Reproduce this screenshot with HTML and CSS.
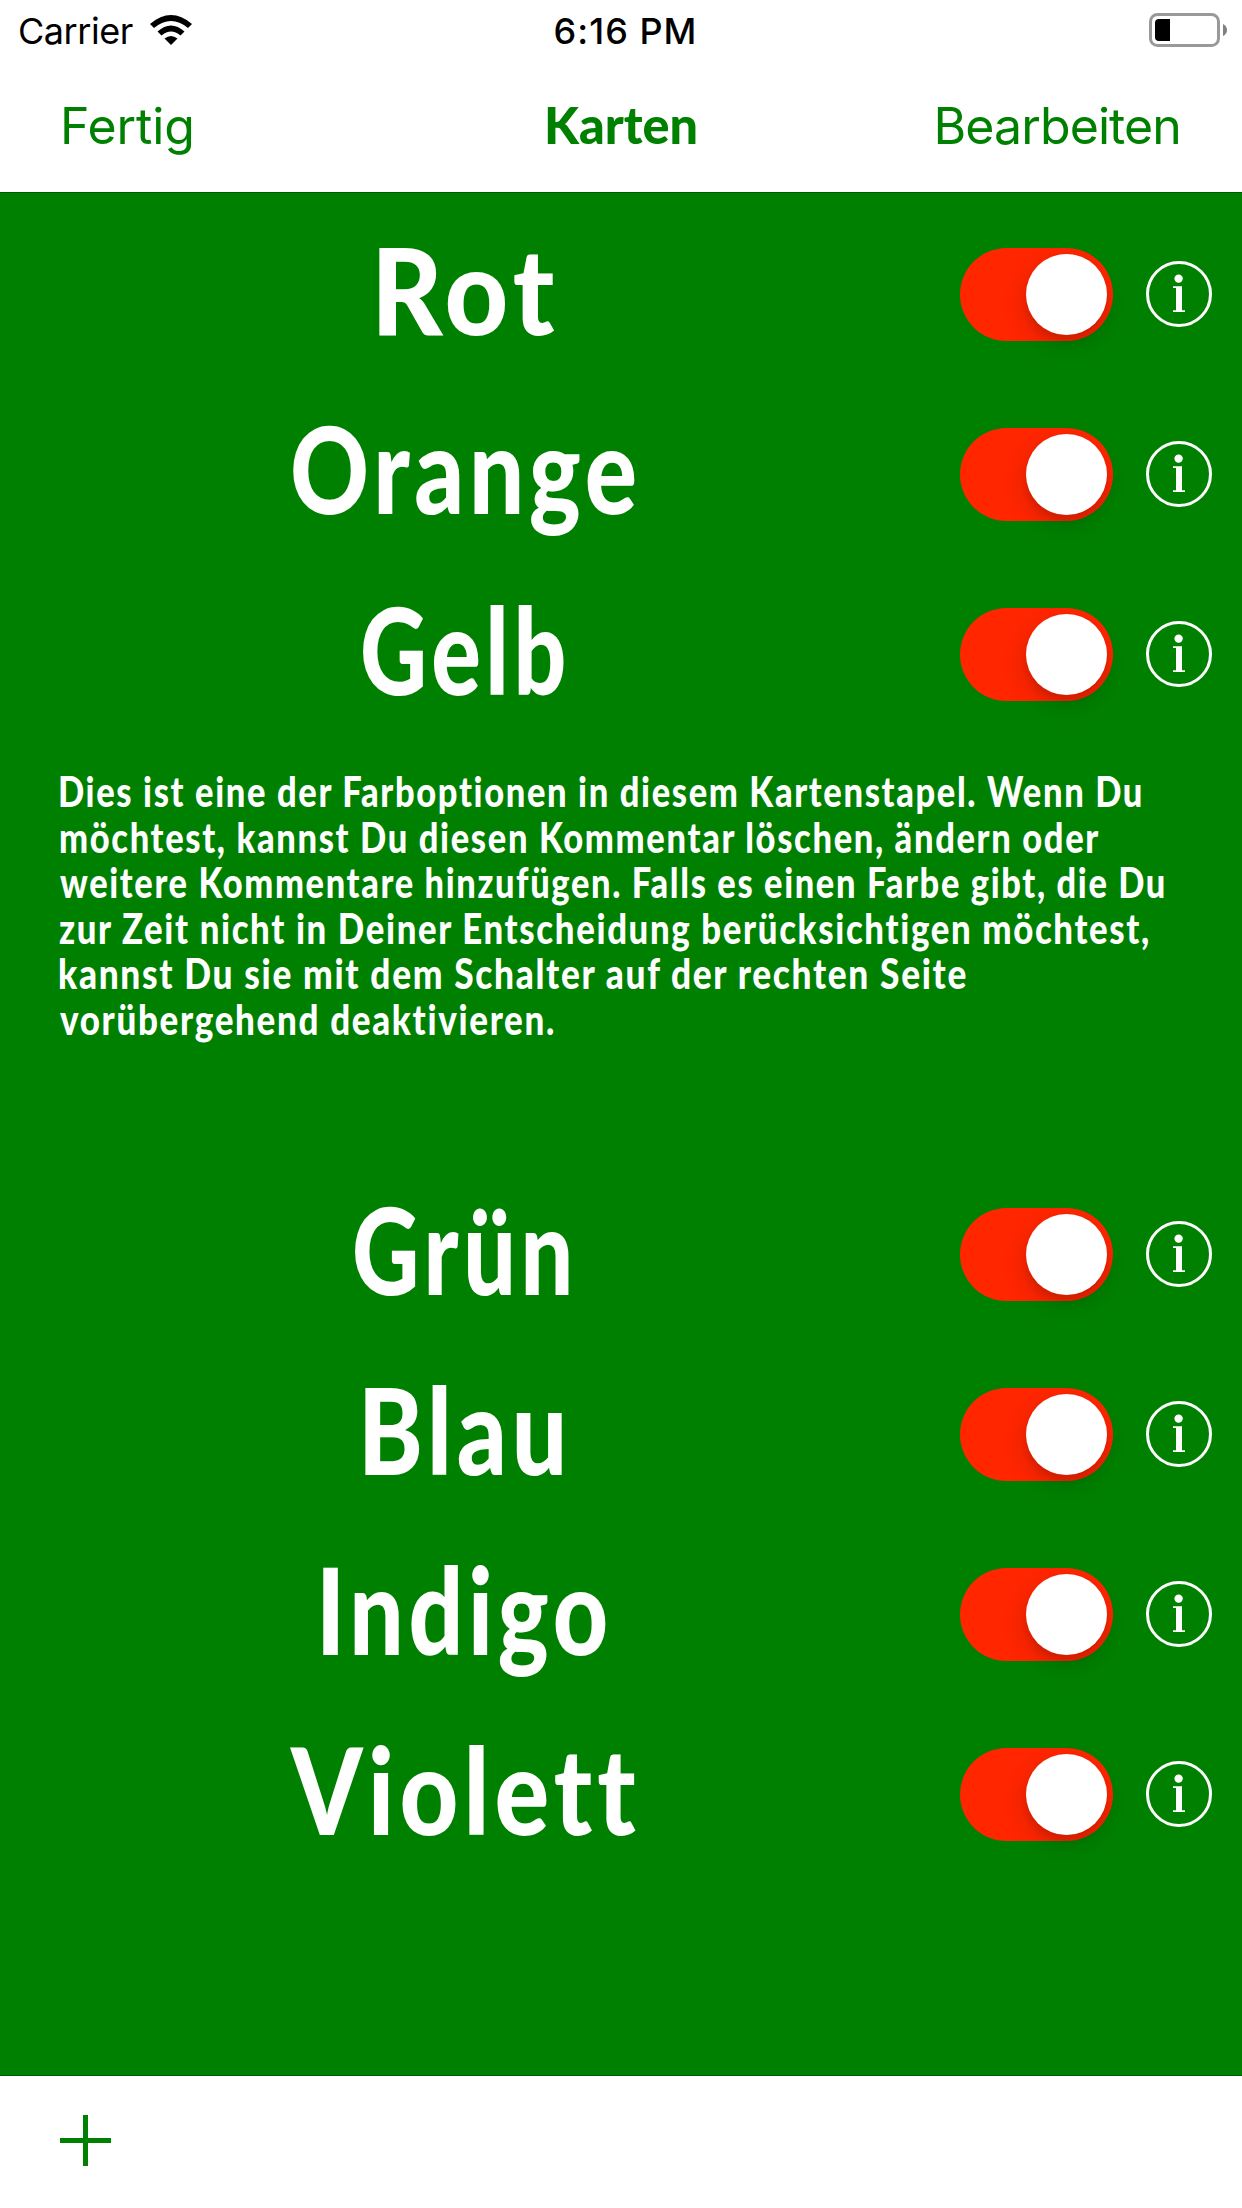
FILE: index.html
```html
<!DOCTYPE html>
<html lang="de">
<head>
<meta charset="utf-8">
<title>Karten</title>
<link rel="stylesheet" href="styles.css">
</head>
<body>
<svg class="defs" width="0" height="0" aria-hidden="true">
  <symbol id="info" viewBox="0 0 66 66">
    <circle cx="33" cy="33" r="31.5" fill="none" stroke="#fff" stroke-width="3"/>
    <circle cx="32.6" cy="17.6" r="4.2" fill="#fff"/>
    <path d="M27 25.2h9v24h3V51H27v-1.8h3V27h-3z" fill="#fff"/>
  </symbol>
</svg>
<div class="screen">
  <header class="top">
    <div class="status">
      <div class="carrier"><span>Carrier</span>
        <svg class="wifi" width="42" height="30" viewBox="0 0 42 30">
          <path d="M0 9Q21-9 42 9L38 13Q21-1 4 13Z"/>
          <path d="M7.500 16.500Q21 4.500 34.500 16.500L30.500 20.500Q21 12.500 11.500 20.500Z"/>
          <path d="M14.500 23.500Q21 18.500 27.500 23.500L21 30Z"/>
        </svg>
      </div>
      <div class="time">6:16 PM</div>
      <svg class="battery" width="79" height="34" viewBox="0 0 79 34">
        <rect x="1.500" y="1.500" width="68" height="31" rx="7" fill="none" stroke="#999" stroke-width="3"/>
        <path d="M21 6v22H10a4 4 0 0 1-4-4V10a4 4 0 0 1 4-4z"/>
        <path d="M74 11q4 2 4 6t-4 6z" fill="#808080"/>
      </svg>
    </div>
    <nav class="nav">
      <a class="done">Fertig</a>
      <svg class="title" width="156" height="60"><text x="1" y="48" textLength="154" lengthAdjust="spacingAndGlyphs">Karten</text></svg>
      <a class="edit">Bearbeiten</a>
    </nav>
  </header>
  <main class="list">
    <div class="row"><svg class="name" width="930" height="180"><text x="371" y="130" textLength="189" lengthAdjust="spacingAndGlyphs">Rot</text></svg><span class="switch"><i class="knob"></i></span><svg class="info"><use href="#info"/></svg></div>
    <div class="row"><svg class="name" width="930" height="180"><text x="290" y="129" textLength="352" lengthAdjust="spacingAndGlyphs">Orange</text></svg><span class="switch"><i class="knob"></i></span><svg class="info"><use href="#info"/></svg></div>
    <div class="row"><svg class="name" width="930" height="180"><text x="360" y="130" textLength="211" lengthAdjust="spacingAndGlyphs">Gelb</text></svg><span class="switch"><i class="knob"></i></span><svg class="info"><use href="#info"/></svg></div>
    <svg class="comment" width="1242" height="420">
      <text x="58" y="62" textLength="1086" lengthAdjust="spacingAndGlyphs">Dies ist eine der Farboptionen in diesem Kartenstapel. Wenn Du</text>
      <text x="59" y="108" textLength="1041" lengthAdjust="spacingAndGlyphs">möchtest, kannst Du diesen Kommentar löschen, ändern oder</text>
      <text x="60" y="153" textLength="1107" lengthAdjust="spacingAndGlyphs">weitere Kommentare hinzufügen. Falls es einen Farbe gibt, die Du</text>
      <text x="59" y="199" textLength="1092" lengthAdjust="spacingAndGlyphs">zur Zeit nicht in Deiner Entscheidung berücksichtigen möchtest,</text>
      <text x="58" y="244" textLength="910" lengthAdjust="spacingAndGlyphs">kannst Du sie mit dem Schalter auf der rechten Seite</text>
      <text x="60" y="290" textLength="496" lengthAdjust="spacingAndGlyphs">vorübergehend deaktivieren.</text>
    </svg>
    <div class="row"><svg class="name" width="930" height="180"><text x="352" y="130" textLength="226" lengthAdjust="spacingAndGlyphs">Grün</text></svg><span class="switch"><i class="knob"></i></span><svg class="info"><use href="#info"/></svg></div>
    <div class="row"><svg class="name" width="930" height="180"><text x="358" y="130" textLength="214" lengthAdjust="spacingAndGlyphs">Blau</text></svg><span class="switch"><i class="knob"></i></span><svg class="info"><use href="#info"/></svg></div>
    <div class="row"><svg class="name" width="930" height="180"><text x="316" y="130" textLength="297" lengthAdjust="spacingAndGlyphs">Indigo</text></svg><span class="switch"><i class="knob"></i></span><svg class="info"><use href="#info"/></svg></div>
    <div class="row"><svg class="name" width="930" height="180"><text x="291" y="130" textLength="350" lengthAdjust="spacingAndGlyphs">Violett</text></svg><span class="switch"><i class="knob"></i></span><svg class="info"><use href="#info"/></svg></div>
  </main>
  <footer class="toolbar">
    <svg width="51" height="51" viewBox="0 0 51 51"><path d="M23 0h5v23h23v5H28v23h-5V28H0v-5h23z" fill="#008000"/></svg>
  </footer>
</div>
</body>
</html>
```
FILE: styles.css
```css
* { box-sizing: border-box; }
body {
  margin: 0;
  background: #fff;
  font-family: Inter, "Liberation Sans", sans-serif;
}
svg { display: block; flex: none; overflow: visible; }
.defs { display: none; }
.screen {
  display: flex;
  flex-direction: column;
  width: 1242px;
  height: 2208px;
}
.top { height: 192px; }
.status {
  display: grid;
  grid-template-columns: 1fr auto 1fr;
  height: 60px;
  padding: 0 14px 0 18px;
  font-size: 36px;
  line-height: 62px;
}
.carrier { display: flex; gap: 17px; letter-spacing: -0.45px; }
.wifi { margin-top: 15px; }
.time { font-weight: 500; letter-spacing: 1px; margin-left: 5px; }
.battery { margin-top: 13px; justify-self: end; }
.nav {
  display: grid;
  grid-template-columns: 1fr auto 1fr;
  height: 132px;
  padding: 36px 61px 0 60px;
  color: #008000;
  font-size: 50px;
  line-height: 60px;
}
.done { letter-spacing: -0.1px; }
.edit { text-align: right; letter-spacing: -0.9px; }
.title, .name, .comment {
  font-family: "Marker Felt", Lato, sans-serif;
  font-weight: 900;
  font-variant-ligatures: none;
}
.title { font-size: 51px; fill: #008000; }
.list {
  flex: 1;
  padding-top: 12px;
  background: #008000;
  border-top: 1px solid #005c00;
  border-bottom: 1px solid #005c00;
}
.row {
  display: flex;
  height: 180px;
}
.name {
  width: 930px;
  height: 180px;
  margin-right: 30px;
  font-size: 120px;
  letter-spacing: 6px;
  fill: #fff;
}
.comment {
  height: 420px;
  font-size: 42px;
  letter-spacing: 2px;
  fill: #fff;
}
.switch {
  display: flex;
  justify-content: flex-end;
  width: 153px;
  height: 93px;
  margin-top: 43px;
  padding: 6px;
  border-radius: 47px;
  background: #ff2600;
}
.knob {
  width: 81px;
  height: 81px;
  border-radius: 50%;
  background: #fff;
  box-shadow: 0 9px 24px rgba(0, 0, 0, 0.16), 0 6px 6px rgba(0, 0, 0, 0.08);
}
.info { width: 66px; height: 66px; margin: 56px 0 0 33px; }
.toolbar { height: 132px; padding: 39px 60px; }
```
